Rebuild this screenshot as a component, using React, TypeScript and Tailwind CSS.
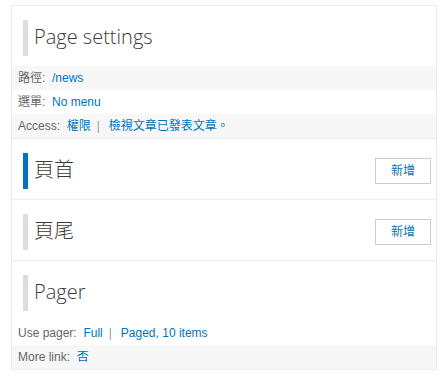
import React from "react";

const cjk = '"Liberation Sans", "Noto Sans CJK TC", sans-serif';
const titleFont = '"Open Sans", "Noto Sans CJK TC", sans-serif';

function Title({ text, active }: { text: string; active?: boolean }) {
  return (
    <div className="flex items-center h-[36px] pl-[11px]">
      <div className={`w-[5px] h-[36px] ${active ? "bg-[#0074bd]" : "bg-[#dddddd]"}`} />
      <div
        className="ml-[6px] mb-[3px] text-[20px] font-light text-[#3b3b3b] leading-none"
        style={{ fontFamily: titleFont }}
      >
        {text}
      </div>
    </div>
  );
}

function Row({ children, shaded }: { children: React.ReactNode; shaded?: boolean }) {
  return (
    <div
      className={`flex items-center h-[24px] pl-[6px] text-[12px] text-[#666666] ${shaded ? "bg-[#f7f7f7]" : "bg-white"}`}
      style={{ fontFamily: cjk }}
    >
      {children}
    </div>
  );
}

const A = ({ children }: { children: React.ReactNode }) => (
  <span className="text-[#0074bd]">{children}</span>
);

function Section({ title, active }: { title: string; active?: boolean }) {
  return (
    <div className="flex items-center justify-between pt-[14px] pb-[10px] pr-[5px] border-b border-[#eeeeee]">
      <Title text={title} active={active} />
      <button
        className="w-[56px] h-[26px] mb-[1px] border border-[#cccccc] bg-white text-[12px] text-[#0074bd]"
        style={{ fontFamily: cjk }}
      >
        新增
      </button>
    </div>
  );
}

export default function App() {
  return (
    <div className="w-[448px] h-[386px] bg-white pt-[5px] pl-[11px]">
      <div className="w-[426px] border border-[#ebebeb] bg-white">
        <div className="pt-[14px] border-b border-[#eeeeee]">
          <Title text="Page settings" />
          <div className="mt-[10px]">
            <Row shaded>
              路徑:&nbsp;&nbsp;<A>/news</A>
            </Row>
            <Row>
              選單:&nbsp;&nbsp;<A>No menu</A>
            </Row>
            <Row shaded>
              Access:&nbsp;&nbsp;<A>權限</A>
              <span className="mx-[6px] text-[#999999]">|</span>
              <span className="ml-[3px]"><A>檢視文章已發表文章。</A></span>
            </Row>
          </div>
        </div>
        <Section title="頁首" active />
        <Section title="頁尾" />
        <div className="pt-[14px]">
          <Title text="Pager" />
          <div className="mt-[10px]">
            <Row>
              Use pager:&nbsp;&nbsp;<A>Full</A>
              <span className="mx-[6px] text-[#999999]">|</span>
              <span className="ml-[3px]"><A>Paged, 10 items</A></span>
            </Row>
            <Row shaded>
              More link:&nbsp;&nbsp;<A>否</A>
            </Row>
          </div>
        </div>
      </div>
    </div>
  );
}
